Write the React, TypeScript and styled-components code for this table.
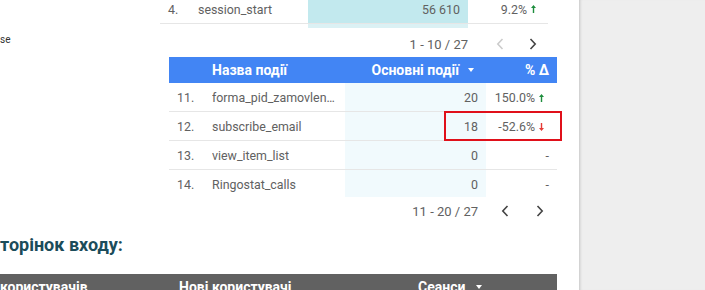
import React from "react";
import styled, { createGlobalStyle } from "styled-components";

const GlobalStyle = createGlobalStyle`
  html, body {
    margin: 0;
    padding: 0;
    height: 290px;
    overflow: hidden;
    background: #ffffff;
    font-family: Roboto, "Noto Sans", "Liberation Sans", sans-serif;
  }
`;

const Page = styled.div`
  display: flex;
  width: 705px;
  height: 290px;
  overflow: hidden;
`;

const Main = styled.div`
  width: 579px;
  flex-shrink: 0;
  overflow: hidden;
  background: #fff;
`;

const SidePanel = styled.div`
  flex: 1;
  background: #eeeeee;
  box-shadow: inset 3px 0 3px -2px rgba(0, 0, 0, 0.18);
`;

const TopArea = styled.div`
  display: flex;
`;

const LeftCol = styled.div`
  width: 160px;
  flex-shrink: 0;
  padding-top: 34px;
  font-size: 10px;
  color: #333;
`;

const Widgets = styled.div`
  display: flex;
  flex-direction: column;
`;

const TopTable = styled.div`
  display: grid;
  grid-template-columns: 38px 110px 160px 80px;
  width: 388px;
  font-size: 12.4px;
  color: #616161;
`;

const Cell = styled.div<{ $align?: "left" | "right"; $bg?: string; $pad?: number }>`
  display: flex;
  align-items: center;
  justify-content: ${(p) => (p.$align === "right" ? "flex-end" : "flex-start")};
  padding: ${(p) => (p.$align === "right" ? `0 ${p.$pad ?? 8}px 0 0` : `0 0 0 ${p.$pad ?? 8}px`)};
  background: ${(p) => p.$bg ?? "transparent"};
  white-space: nowrap;
  overflow: hidden;
  min-width: 0;
`;

const TopRowCell = styled(Cell)`
  height: 24px;
  padding-bottom: 5px;
  box-sizing: border-box;
  border-bottom: 1px solid #e6e6e6;
`;

const Filler = styled.div<{ $bg?: string }>`
  height: 4px;
  background: ${(p) => p.$bg ?? "transparent"};
`;

const Pager = styled.div<{ $width: number; $shift?: number; $top?: number }>`
  display: flex;
  align-items: center;
  justify-content: flex-end;
  width: ${(p) => p.$width}px;
  margin-left: ${(p) => p.$shift ?? 0}px;
  margin-top: ${(p) => p.$top ?? 0}px;
  height: 24px;
  font-size: 13px;
  color: #616161;
`;

const PagerText = styled.span<{ $gap: number }>`
  margin-right: ${(p) => p.$gap}px;
`;

const ChevronBtn = styled.span<{ $gap?: number; $w?: number }>`
  width: ${(p) => p.$w ?? 24}px;
  height: 24px;
  display: flex;
  align-items: center;
  justify-content: center;
  margin-left: ${(p) => p.$gap ?? 0}px;
`;

const DataTable = styled.div`
  position: relative;
  margin-top: 1px;
  margin-left: 9px;
  width: 388px;
  display: grid;
  grid-template-columns: 43px 133px 141px 71px;
  font-size: 12.4px;
  color: #616161;
`;

const HeadCell = styled(Cell)`
  height: 26px;
  background: #4285f4;
  color: #fff;
  font-size: 14px;
  font-weight: 700;
`;

const BodyCell = styled(Cell)<{ $last?: boolean }>`
  height: 29px;
  box-sizing: border-box;
  padding-top: ${(p) => (p.$last ? 0 : 1)}px;
  border-bottom: ${(p) => (p.$last ? "none" : "1px solid #e6e6e6")};
`;

const NameCell = styled(BodyCell)`
  padding-right: 8px;
`;

const Ellipsis = styled.span`
  overflow: hidden;
  text-overflow: ellipsis;
  white-space: nowrap;
`;

const MetricBg = styled.div`
  position: absolute;
  z-index: 0;
  left: 176px;
  top: 26px;
  width: 141px;
  height: 114px;
  background: #f1fafd;
`;

const Layer = styled.div`
  display: contents;
  & > * {
    position: relative;
    z-index: 1;
  }
`;

const Highlight = styled.div`
  position: absolute;
  z-index: 2;
  left: 275px;
  top: 54px;
  width: 118px;
  height: 30px;
  box-sizing: border-box;
  border: 2px solid #e0101a;
`;

const Arrow = styled.span`
  display: inline-flex;
  width: 10px;
  justify-content: center;
  margin-left: 1px;
`;

const Heading = styled.h2`
  margin: 11px 0 0;
  font-size: 18px;
  line-height: 22px;
  font-weight: 700;
  color: #1b4c5a;
  white-space: nowrap;
`;

const DarkHeader = styled.div`
  margin-top: 18px;
  width: 557px;
  height: 24px;
  background: #616161;
  display: grid;
  grid-template-columns: 179px 239px 139px;
  align-items: start;
  color: #fff;
  font-size: 14px;
  line-height: 16px;
  font-weight: 700;
  padding-top: 5px;
  box-sizing: border-box;
`;

const SortLabel = styled.span`
  display: flex;
  align-items: center;
`;

const SortTri = ({ color = "#fff", gap = 9 }: { color?: string; gap?: number }) => (
  <svg width="6" height="4" viewBox="0 0 6 4" style={{ marginLeft: gap }}>
    <path d="M0 0 L6 0 L3 4 Z" fill={color} />
  </svg>
);

const Chevron = ({ dir, color }: { dir: "left" | "right"; color: string }) => (
  <svg width="8" height="12" viewBox="0 0 8 12">
    <path
      d={dir === "left" ? "M6.5 1 L1.8 6 L6.5 11" : "M1.5 1 L6.2 6 L1.5 11"}
      fill="none"
      stroke={color}
      strokeWidth="1.6"
    />
  </svg>
);

const UpDown = ({ up }: { up: boolean }) => (
  <Arrow>
    <svg width="5" height="8" viewBox="0 0 5 8">
      {up ? (
        <path d="M2.5 0 L5 3 L3.2 3 L3.2 8 L1.8 8 L1.8 3 L0 3 Z" fill="#1e8e3e" />
      ) : (
        <path d="M2.5 8 L5 5 L3.2 5 L3.2 0 L1.8 0 L1.8 5 L0 5 Z" fill="#e53935" />
      )}
    </svg>
  </Arrow>
);

type Row = { n: string; name: string; value: string; pct: string; up?: boolean };

const rows: Row[] = [
  { n: "11.", name: "forma_pid_zamovlennya", value: "20", pct: "150.0%", up: true },
  { n: "12.", name: "subscribe_email", value: "18", pct: "-52.6%", up: false },
  { n: "13.", name: "view_item_list", value: "0", pct: "-" },
  { n: "14.", name: "Ringostat_calls", value: "0", pct: "-" },
];

export default function App() {
  return (
    <>
      <GlobalStyle />
      <Page>
        <Main>
          <TopArea>
            <LeftCol>se</LeftCol>
            <Widgets>
              <TopTable>
                <TopRowCell>4.</TopRowCell>
                <TopRowCell $pad={0}>session_start</TopRowCell>
                <TopRowCell $align="right" $bg="#c2e9ee">56 610</TopRowCell>
                <TopRowCell $align="right" $pad={10}>
                  9.2%
                  <UpDown up />
                </TopRowCell>
                <Filler />
                <Filler />
                <Filler $bg="#dbf1f4" />
                <Filler />
              </TopTable>
              <Pager $width={388} $top={4}>
                <PagerText $gap={20}>1 - 10 / 27</PagerText>
                <ChevronBtn>
                  <Chevron dir="left" color="#cccccc" />
                </ChevronBtn>
                <ChevronBtn $gap={9}>
                  <Chevron dir="right" color="#444444" />
                </ChevronBtn>
                <ChevronBtn $w={3} />
              </Pager>
              <DataTable>
                <MetricBg />
                <Layer>
                  <HeadCell />
                  <HeadCell $pad={0}>Назва події</HeadCell>
                  <HeadCell $align="right" $pad={12}>
                    Основні події
                    <SortTri />
                  </HeadCell>
                  <HeadCell $align="right">% Δ</HeadCell>
                  {rows.map((r, i) => {
                    const last = i === rows.length - 1;
                    return (
                      <React.Fragment key={r.n}>
                        <BodyCell $last={last}>{r.n}</BodyCell>
                        <NameCell $last={last} $pad={0}>
                          <Ellipsis>{r.name}</Ellipsis>
                        </NameCell>
                        <BodyCell $last={last} $align="right">
                          {r.value}
                        </BodyCell>
                        <BodyCell $last={last} $align="right" $pad={r.up === undefined ? 8 : 11}>
                          {r.pct}
                          {r.up !== undefined && <UpDown up={r.up} />}
                        </BodyCell>
                      </React.Fragment>
                    );
                  })}
                </Layer>
                <Highlight />
              </DataTable>
              <Pager $width={388} $shift={9}>
                <PagerText $gap={15}>11 - 20 / 27</PagerText>
                <ChevronBtn>
                  <Chevron dir="left" color="#444444" />
                </ChevronBtn>
                <ChevronBtn $gap={11}>
                  <Chevron dir="right" color="#444444" />
                </ChevronBtn>
                <ChevronBtn $w={5} />
              </Pager>
            </Widgets>
          </TopArea>
          <Heading>торінок входу:</Heading>
          <DarkHeader>
            <span>користувачів</span>
            <span>Нові користувачі</span>
            <SortLabel>
              Сеанси
              <SortTri gap={11} />
            </SortLabel>
          </DarkHeader>
        </Main>
        <SidePanel />
      </Page>
    </>
  );
}
